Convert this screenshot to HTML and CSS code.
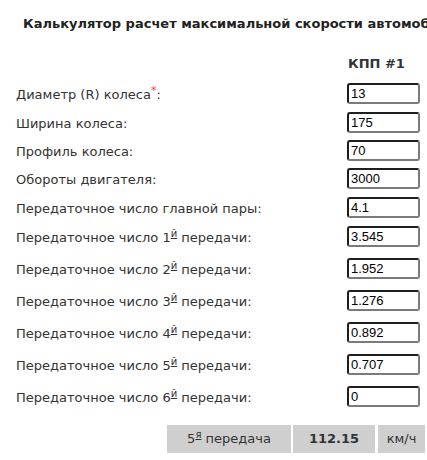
FILE: index.html
```html
<!DOCTYPE html>
<html lang="ru">
<head>
<meta charset="utf-8">
<title>Калькулятор</title>
<link rel="stylesheet" href="styles.css">
</head>
<body>
<div class="page">
  <div class="title">Калькулятор расчет максимальной скорости автомобиля</div>
  <div class="form">
    <div class="head-row">
      <div></div>
      <div class="col-head">КПП #1</div>
    </div>
    <div class="row h29"><label class="lbl">Диаметр (R) колеса<sup class="req">*</sup>:</label><input class="inp" type="text" value="13"></div>
    <div class="row h28"><label class="lbl">Ширина колеса:</label><input class="inp" type="text" value="175"></div>
    <div class="row h28"><label class="lbl">Профиль колеса:</label><input class="inp" type="text" value="70"></div>
    <div class="row h29"><label class="lbl">Обороты двигателя:</label><input class="inp" type="text" value="3000"></div>
    <div class="row h29"><label class="lbl">Передаточное число главной пары:</label><input class="inp" type="text" value="4.1"></div>
    <div class="row h32"><label class="lbl">Передаточное число 1<sup class="ord">й</sup> передачи:</label><input class="inp" type="text" value="3.545"></div>
    <div class="row h32"><label class="lbl">Передаточное число 2<sup class="ord">й</sup> передачи:</label><input class="inp" type="text" value="1.952"></div>
    <div class="row h32"><label class="lbl">Передаточное число 3<sup class="ord">й</sup> передачи:</label><input class="inp" type="text" value="1.276"></div>
    <div class="row h32"><label class="lbl">Передаточное число 4<sup class="ord">й</sup> передачи:</label><input class="inp" type="text" value="0.892"></div>
    <div class="row h32"><label class="lbl">Передаточное число 5<sup class="ord">й</sup> передачи:</label><input class="inp" type="text" value="0.707"></div>
    <div class="row h32"><label class="lbl">Передаточное число 6<sup class="ord">й</sup> передачи:</label><input class="inp" type="text" value="0"></div>
  </div>
  <div class="result">
    <div class="cell gear">5<sup class="ord">я</sup> передача</div>
    <div class="cell speed">112.15</div>
    <div class="cell unit">км/ч</div>
  </div>
</div>
</body>
</html>
```
FILE: styles.css
```css
html, body {
  margin: 0;
  padding: 0;
  background: #fff;
}
body {
  font-family: "DejaVu Sans", Verdana, sans-serif;
  font-size: 13px;
  color: #333;
  overflow: hidden;
}
.page {
  width: 427px;
  overflow: hidden;
}
.title {
  padding: 16px 0 0 23px;
  font-weight: bold;
  line-height: 16px;
  white-space: nowrap;
  color: #222;
}
.form {
  padding-left: 16px;
}
.head-row {
  display: grid;
  grid-template-columns: 331px 73px;
  margin-top: 24px;
  height: 27px;
}
.col-head {
  font-weight: bold;
  line-height: 16px;
  padding-left: 1px;
}
.row {
  display: grid;
  grid-template-columns: 331px 73px;
  align-items: start;
}
.h28 { height: 28px; }
.h29 { height: 29px; }
.h32 { height: 32px; }
.lbl {
  line-height: 16px;
  margin-top: 4px;
  white-space: nowrap;
}
.req {
  color: #f33;
  font-size: 11px;
  line-height: 0;
  vertical-align: 5px;
}
.ord {
  font-size: 10px;
  line-height: 0;
  text-decoration: underline;
  vertical-align: 5px;
}
.inp {
  box-sizing: border-box;
  width: 73px;
  height: 21px;
  margin: 0;
  padding: 0 2px;
  border: 2px solid;
  border-color: #1e1e1e #7a7a7a #7a7a7a #1e1e1e;
  border-radius: 3px;
  font-family: "Liberation Sans", Arial, sans-serif;
  font-size: 13px;
  color: #000;
  background: #fff;
  outline: none;
}
.result {
  display: flex;
  justify-content: flex-end;
  gap: 2px;
  margin: 7px 2px 0 0;
}
.cell {
  height: 28px;
  line-height: 28px;
  background: #cfcfcf;
  text-align: center;
  color: #333;
}
.gear { width: 124px; }
.speed { width: 82px; font-weight: bold; }
.unit { width: 47px; margin-left: 1px; }
```
